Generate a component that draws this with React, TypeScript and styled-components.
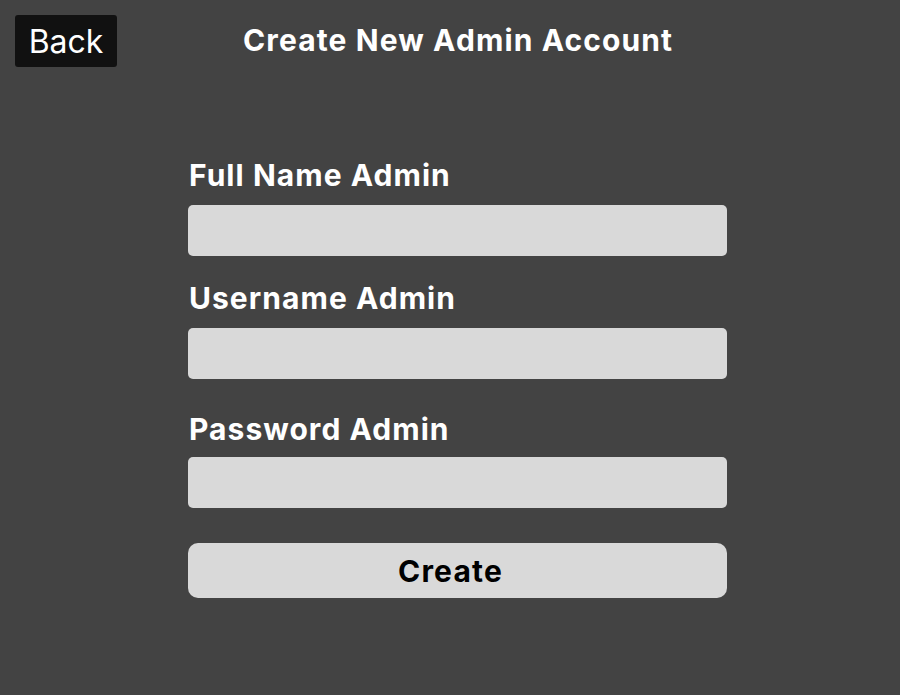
import React from "react";
import styled, { createGlobalStyle } from "styled-components";

const Global = createGlobalStyle`
  html, body {
    margin: 0;
    padding: 0;
    background: #434343;
    font-family: Inter, "Noto Sans", sans-serif;
  }
  #root {
    min-height: 695px;
  }
`;

const Page = styled.div`
  width: 900px;
  min-height: 695px;
  background: #434343;
  padding: 15px 0 0 15px;
  box-sizing: border-box;
`;

const Header = styled.header`
  display: flex;
  align-items: flex-start;
`;

const BackButton = styled.button`
  width: 102px;
  height: 52px;
  background: #111111;
  color: #ffffff;
  border: none;
  border-radius: 3px;
  font-family: Inter, sans-serif;
  font-size: 32px;
  font-weight: 400;
  padding: 0;
  cursor: pointer;
`;

const Title = styled.h1`
  margin: 7px 0 0 126px;
  color: #ffffff;
  font-size: 30px;
  font-weight: 700;
  line-height: 36px;
  letter-spacing: 0.037em;
`;

const Form = styled.form`
  display: flex;
  flex-direction: column;
  width: 539px;
  margin: 91px 0 0 173px;
`;

const Label = styled.label<{ $top: number }>`
  display: block;
  margin-top: ${(p) => p.$top}px;
  color: #ffffff;
  font-size: 30px;
  font-weight: 700;
  line-height: 34px;
  letter-spacing: 0.035em;
  padding-left: 1px;
`;

const Input = styled.input<{ $gap: number }>`
  margin-top: ${(p) => p.$gap}px;
  height: 51px;
  width: 539px;
  box-sizing: border-box;
  background: #d9d9d9;
  border: none;
  border-radius: 5px;
  outline: none;
  font-family: Inter, sans-serif;
  font-size: 20px;
  padding: 0 12px;
`;

const Submit = styled.button`
  margin-top: 35px;
  height: 55px;
  width: 539px;
  background: #d9d9d9;
  color: #000000;
  border: none;
  border-radius: 10px;
  font-family: Inter, sans-serif;
  font-size: 30px;
  font-weight: 700;
  letter-spacing: 0.04em;
  padding: 0 14px 0 0;
  cursor: pointer;
`;

const fields = [
  { label: "Full Name Admin", top: 0, gap: 13, type: "text", id: "fullname" },
  { label: "Username Admin", top: 25, gap: 13, type: "text", id: "username" },
  { label: "Password Admin", top: 33, gap: 11, type: "password", id: "password" },
];

export default function App() {
  return (
    <Page>
      <Global />
      <Header>
        <BackButton type="button">Back</BackButton>
        <Title>Create New Admin Account</Title>
      </Header>
      <Form onSubmit={(e) => e.preventDefault()}>
        {fields.map((f) => (
          <React.Fragment key={f.id}>
            <Label htmlFor={f.id} $top={f.top}>
              {f.label}
            </Label>
            <Input id={f.id} type={f.type} $gap={f.gap} />
          </React.Fragment>
        ))}
        <Submit type="submit">Create</Submit>
      </Form>
    </Page>
  );
}
